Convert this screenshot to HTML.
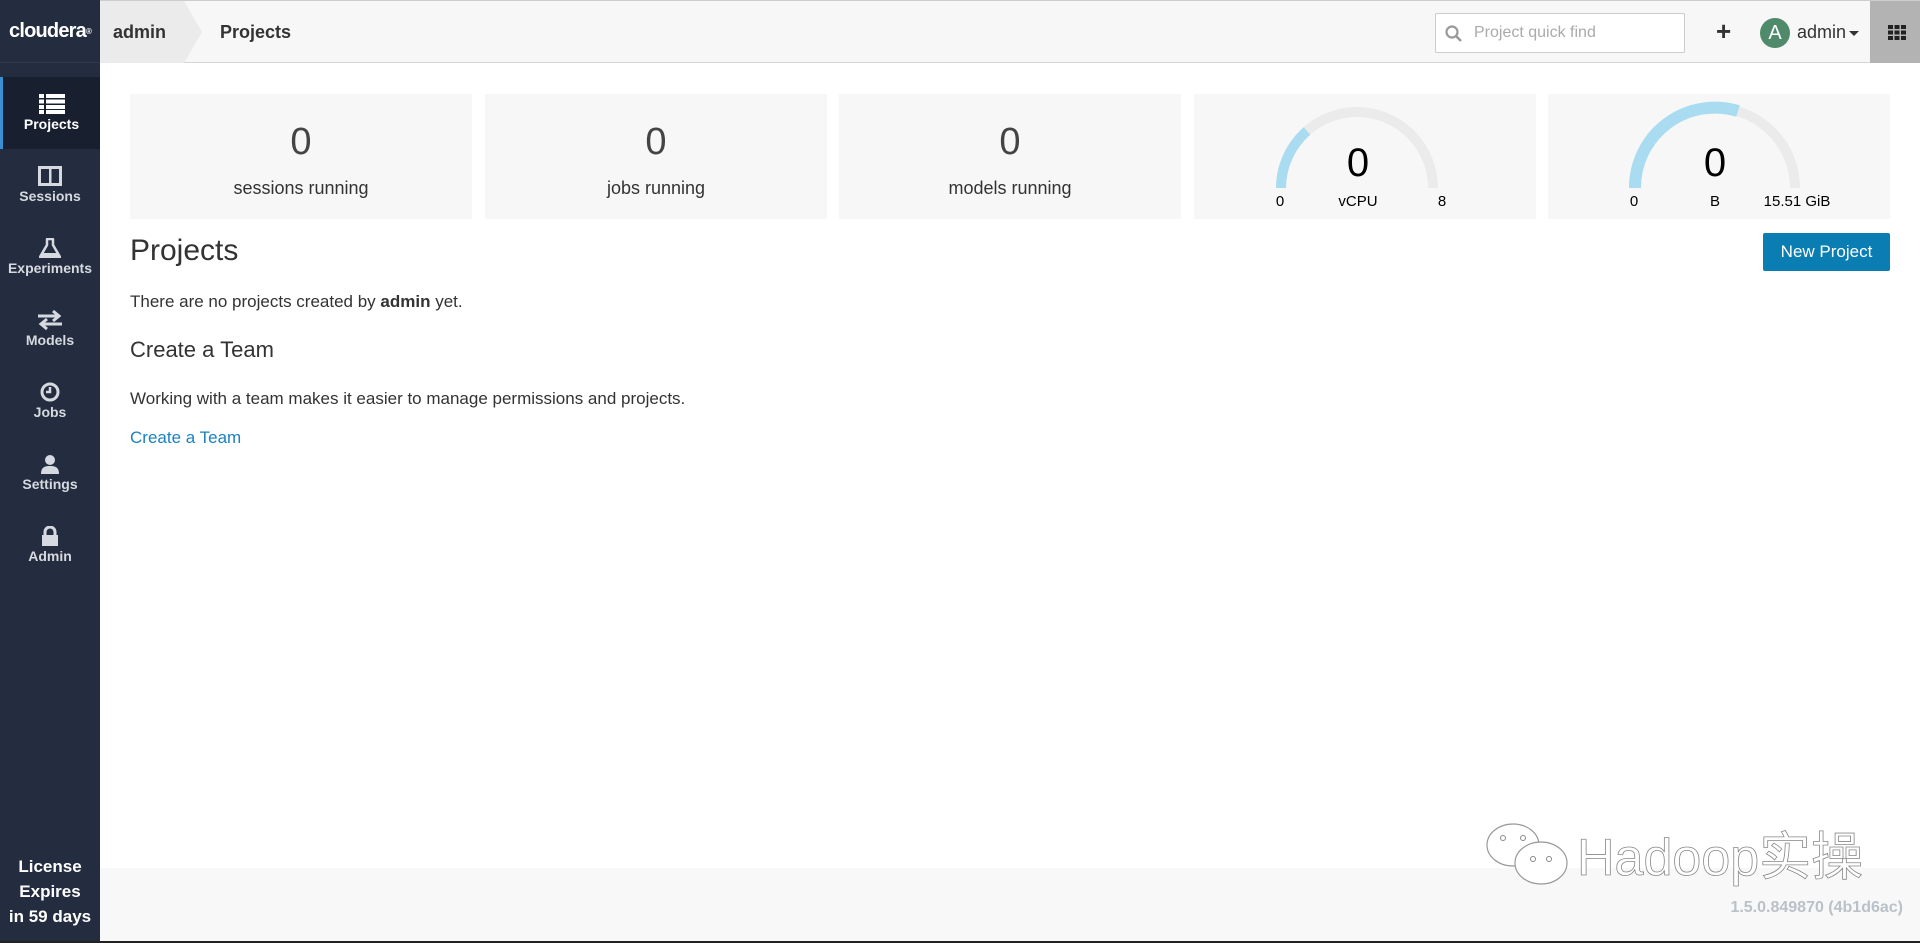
<!DOCTYPE html>
<html><head><meta charset="utf-8"><style>
*{margin:0;padding:0;box-sizing:border-box}
body{width:1920px;height:943px;overflow:hidden;font-family:"Liberation Sans",Arial,sans-serif;background:#fff;color:#333;position:relative}
.side{position:absolute;left:0;top:0;width:100px;height:943px;background:#232d3f}
.logo{height:63px;border-bottom:1px solid #2f3a4d;color:#fff;font-weight:bold;font-size:20px;line-height:63px;padding-left:9px;letter-spacing:-0.8px}
.item{position:absolute;left:0;width:100px;height:72px;text-align:center;color:#d6dae0;font-size:14px;font-weight:bold}
.item svg{display:block;margin:17px auto 2px}
.item.act{background:#182030;border-left:3px solid #3a8fd0;color:#fff}
.lic{position:absolute;left:0;width:100px;bottom:14px;text-align:center;color:#fff;font-weight:bold;font-size:17px;line-height:25px}
.top{position:absolute;left:100px;top:0;right:0;height:63px;background:#f7f7f7;border-top:1px solid #ccc;border-bottom:1px solid #d6d6d6}
.bc{position:absolute;left:0;top:0;height:62px;width:84px;background:#eaebea}
.bc:after{content:"";position:absolute;right:-18px;top:0;border-left:18px solid #eaebea;border-top:31px solid transparent;border-bottom:31px solid transparent}
.t{position:absolute;top:0;line-height:62px;font-size:18px;font-weight:bold;color:#333}
.search{position:absolute;left:1335px;top:12px;width:250px;height:40px;background:#fff;border:1px solid #ccc;border-radius:2px;color:#aaa;font-size:16px;line-height:38px;padding-left:38px}
.grid{position:absolute;right:0;top:0;width:50px;height:62px;background:#b3b3b3}
.card{position:absolute;top:94px;width:342px;height:125px;background:#f7f7f7;text-align:center}
.num{position:absolute;left:0;right:0;top:27px;font-size:38px;font-weight:300;color:#444}
.card .lab{position:absolute;left:0;right:0;top:84px;font-size:18px}
h1{position:absolute;left:130px;top:234px;font-size:30px;font-weight:normal;color:#333}
.p{position:absolute;left:130px;font-size:17px;color:#333}
.btn{position:absolute;left:1763px;top:233px;width:127px;height:38px;background:#0a7db3;color:#fff;font-size:17px;line-height:38px;text-align:center;border-radius:2px}
.foot{position:absolute;left:100px;right:0;top:868px;bottom:2px;background:#f8f8f8}
</style></head><body>
<div class="side">
<div class="logo">cloudera<span style="font-size:8px;vertical-align:top">®</span></div>
<div class="item act" style="top:77px"><svg width="26" height="20" viewBox="0 0 26 20"><g fill="#fff"><rect x="0" y="0" width="5" height="4"/><rect x="7" y="0" width="19" height="4"/><rect x="0" y="5.5" width="5" height="4"/><rect x="7" y="5.5" width="19" height="4"/><rect x="0" y="11" width="5" height="4"/><rect x="7" y="11" width="19" height="4"/><rect x="0" y="16" width="5" height="4"/><rect x="7" y="16" width="19" height="4"/></g></svg>Projects</div>
<div class="item" style="top:149px"><svg width="24" height="20" viewBox="0 0 24 20"><rect x="1.5" y="1.5" width="21" height="17" fill="none" stroke="#d6dae0" stroke-width="3"/><rect x="11" y="1" width="2.5" height="18" fill="#d6dae0"/></svg>Sessions</div>
<div class="item" style="top:221px"><svg width="22" height="20" viewBox="0 0 22 20"><path d="M7 1h8M8 1v6L1 19h20L14 7V1" fill="none" stroke="#d6dae0" stroke-width="2.5"/><path d="M4 15h14l2 4H2z" fill="#d6dae0"/></svg>Experiments</div>
<div class="item" style="top:293px"><svg width="26" height="20" viewBox="0 0 26 20"><path d="M1 6h20M16 1l6 5-6 5M25 14H5M10 9l-6 5 6 5" fill="none" stroke="#d6dae0" stroke-width="3"/></svg>Models</div>
<div class="item" style="top:365px"><svg width="20" height="20" viewBox="0 0 20 20"><circle cx="10" cy="10" r="8" fill="none" stroke="#d6dae0" stroke-width="3"/><path d="M10 5v5H6" fill="none" stroke="#d6dae0" stroke-width="2.5"/></svg>Jobs</div>
<div class="item" style="top:437px"><svg width="20" height="20" viewBox="0 0 20 20"><circle cx="10" cy="6" r="5" fill="#d6dae0"/><path d="M1 20c0-7 4-8 9-8s9 1 9 8z" fill="#d6dae0"/></svg>Settings</div>
<div class="item" style="top:509px"><svg width="18" height="20" viewBox="0 0 18 20"><path d="M4 9V6a5 5 0 0 1 10 0v3" fill="none" stroke="#d6dae0" stroke-width="3"/><rect x="1" y="9" width="16" height="11" fill="#d6dae0"/></svg>Admin</div>
<div class="lic">License<br>Expires<br>in 59 days</div>
</div>
<div class="top">
<div class="bc"></div>
<div class="t" style="left:13px">admin</div>
<div class="t" style="left:120px">Projects</div>
<div class="search"><svg style="position:absolute;left:9px;top:11px" width="17" height="17" viewBox="0 0 17 17"><circle cx="7" cy="7" r="5.5" fill="none" stroke="#999" stroke-width="2.2"/><path d="M11 11l5 5" stroke="#999" stroke-width="2.5"/></svg>Project quick find</div>
<div style="position:absolute;left:1616px;top:17px;font-size:26px;font-weight:bold;color:#333;line-height:26px">+</div>
<div style="position:absolute;left:1660px;top:17px;width:30px;height:30px;border-radius:50%;background:#4f8a6a;color:#fff;font-size:20px;line-height:30px;text-align:center">A</div>
<div style="position:absolute;left:1697px;top:0;line-height:62px;font-size:18px;color:#333">admin<span style="display:inline-block;margin-left:3px;vertical-align:middle;border-left:5px solid transparent;border-right:5px solid transparent;border-top:5px solid #333"></span></div>
<div class="grid"><svg style="position:absolute;left:18px;top:24px" width="18" height="15" viewBox="0 0 18 15"><g fill="#222"><rect x="0" y="0" width="5" height="4"/><rect x="6.5" y="0" width="5" height="4"/><rect x="13" y="0" width="5" height="4"/><rect x="0" y="5.5" width="5" height="4"/><rect x="6.5" y="5.5" width="5" height="4"/><rect x="13" y="5.5" width="5" height="4"/><rect x="0" y="11" width="5" height="4"/><rect x="6.5" y="11" width="5" height="4"/><rect x="13" y="11" width="5" height="4"/></g></svg></div>
</div>
<div class="card" style="left:130px"><div class="num">0</div><div class="lab">sessions running</div></div>
<div class="card" style="left:485px"><div class="num">0</div><div class="lab">jobs running</div></div>
<div class="card" style="left:839px"><div class="num">0</div><div class="lab">models running</div></div>
<div class="card" style="left:1194px"><svg width="342" height="125" style="position:absolute;left:0;top:0"><path d="M87 94A76 76 0 0 1 239 94" fill="none" stroke="#ebebeb" stroke-width="10"/><path d="M87 94A76 76 0 0 1 113 37" fill="none" stroke="#a9dcf0" stroke-width="10"/><text x="164" y="82" font-size="40" text-anchor="middle" font-family="Liberation Sans" fill="#000">0</text><text x="86" y="112" font-size="15" text-anchor="middle" font-family="Liberation Sans" fill="#000">0</text><text x="164" y="112" font-size="15" text-anchor="middle" font-family="Liberation Sans" fill="#000">vCPU</text><text x="248" y="112" font-size="15" text-anchor="middle" font-family="Liberation Sans" fill="#000">8</text></svg></div>
<div class="card" style="left:1548px"><svg width="342" height="125" style="position:absolute;left:0;top:0"><path d="M87 94A80 80 0 0 1 247 94" fill="none" stroke="#ebebeb" stroke-width="10"/><path d="M87 94A80 80 0 0 1 190 17" fill="none" stroke="#a9dcf0" stroke-width="12"/><text x="167" y="82" font-size="40" text-anchor="middle" font-family="Liberation Sans" fill="#000">0</text><text x="86" y="112" font-size="15" text-anchor="middle" font-family="Liberation Sans" fill="#000">0</text><text x="167" y="112" font-size="15" text-anchor="middle" font-family="Liberation Sans" fill="#000">B</text><text x="249" y="112" font-size="15" text-anchor="middle" font-family="Liberation Sans" fill="#000">15.51 GiB</text></svg></div>
<h1>Projects</h1>
<div class="btn">New Project</div>
<div class="p" style="top:292px">There are no projects created by <b>admin</b> yet.</div>
<div class="p" style="top:337px;font-size:22px">Create a Team</div>
<div class="p" style="top:389px">Working with a team makes it easier to manage permissions and projects.</div>
<div class="p" style="top:428px;color:#1a82c0">Create a Team</div>
<div class="foot"></div>
<div style="position:absolute;left:1485px;top:815px;font-size:52px;color:#fff;-webkit-text-stroke:0.8px #888;font-family:'Liberation Sans','Noto Sans CJK SC',sans-serif;padding-left:92px">Hadoop实操
<svg style="position:absolute;left:0;top:6px" width="90" height="72" viewBox="0 0 90 72"><ellipse cx="28" cy="24" rx="26" ry="21" fill="#fff" stroke="#999" stroke-width="1.2"/><ellipse cx="56" cy="42" rx="26" ry="21" fill="#fff" stroke="#999" stroke-width="1.2"/><circle cx="18" cy="17" r="2.5" fill="none" stroke="#888"/><circle cx="38" cy="17" r="2.5" fill="none" stroke="#888"/><circle cx="48" cy="38" r="2.5" fill="none" stroke="#888"/><circle cx="64" cy="38" r="2.5" fill="none" stroke="#888"/></svg></div>
<div style="position:absolute;right:17px;top:899px;font-size:16px;font-weight:bold;color:#b9c1c9">1.5.0.849870 (4b1d6ac)</div>
<div style="position:absolute;left:0;right:0;bottom:0;height:2px;background:#222"></div>
</body></html>
